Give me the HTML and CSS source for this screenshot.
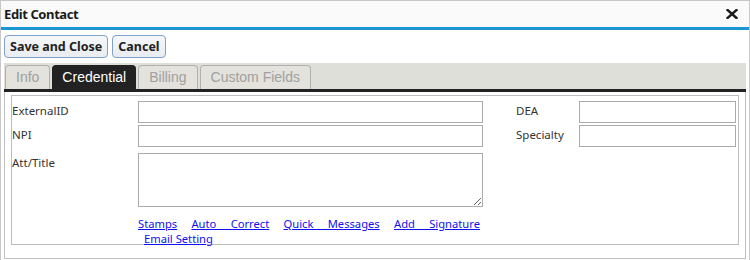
FILE: index.html
```html
<!DOCTYPE html>
<html lang="en">
<head>
    <meta charset="UTF-8">
    <title>Edit Contact</title>
    <link rel="stylesheet" href="styles.css">
</head>
<body>
    <div class="window">
        <div class="titlebar">
            <div class="title">Edit Contact</div>
            <svg class="close" width="12" height="10" viewBox="0 0 12 10">
                <path d="M1.5 1 L10.5 9 M10.5 1 L1.5 9" stroke="#1a1a1a" stroke-width="2.4" stroke-linecap="square"/>
            </svg>
        </div>

        <div class="toolbar">
            <button class="btn">Save and Close</button>
            <button class="btn">Cancel</button>
        </div>

        <div class="tabs">
            <div class="tab">Info</div>
            <div class="tab active">Credential</div>
            <div class="tab">Billing</div>
            <div class="tab">Custom Fields</div>
        </div>

        <div class="panel">
            <div class="box">
                <div class="form">
                    <label class="lbl">ExternalID</label>
                    <input type="text" class="field">
                    <label class="lbl lbl-right">DEA</label>
                    <input type="text" class="field">

                    <label class="lbl">NPI</label>
                    <input type="text" class="field">
                    <label class="lbl lbl-right">Specialty</label>
                    <input type="text" class="field">

                    <label class="lbl lbl-area">Att/Title</label>
                    <textarea class="area"></textarea>

                    <div class="links">
                        <div class="links-row">
                            <a href="#">Stamps</a> <a href="#">Auto Correct</a> <a href="#">Quick Messages</a> <a href="#">Add Signature</a>
                        </div>
                        <a href="#" class="email">Email Setting</a>
                    </div>
                </div>
            </div>
        </div>
    </div>
</body>
</html>
```

FILE: styles.css
```css
* {
    margin: 0;
    padding: 0;
    box-sizing: border-box;
}

body {
    font-family: 'Noto Sans', 'Open Sans', sans-serif;
    font-size: 11px;
    color: #333;
    background: #fff;
}

.window {
    width: 750px;
    height: 260px;
    border: 1px solid #c8c8c8;
    border-bottom: none;
    overflow: hidden;
}

.titlebar {
    height: 29px;
    background: #fafafa;
    border-bottom: 3px solid #1b95d3;
    display: flex;
    align-items: center;
    justify-content: space-between;
    padding: 0 11px 1px 3px;
}

.title {
    font-weight: bold;
    font-size: 13px;
    letter-spacing: -0.4px;
    color: #1a1a1a;
}

.close {
    display: block;
}

.toolbar {
    display: flex;
    gap: 4px;
    padding: 5px 3px 5px;
}

.btn {
    height: 23px;
    padding: 0 5px;
    font-family: 'Noto Sans', 'Open Sans', sans-serif;
    font-weight: bold;
    font-size: 12.5px;
    color: #222;
    background: linear-gradient(#f6f7f9, #e9ecf0);
    border: 1px solid #7da2ce;
    border-radius: 4px;
}

.tabs {
    margin: 0 3px;
    height: 29px;
    padding: 2px 1px 0;
    background: #dfdfd9;
    border-bottom: 3px solid #222;
    display: flex;
    gap: 2px;
    align-items: flex-end;
}

.tab {
    height: 24px;
    padding: 0 10px;
    font-family: 'Liberation Sans', Arial, sans-serif;
    font-size: 14px;
    line-height: 23px;
    color: #a0a0a0;
    background: #e3e2dc;
    border: 1px solid #b0b0b0;
    border-bottom: none;
    border-radius: 4px 4px 0 0;
}

.tab.active {
    padding: 0 9px;
    background: #222;
    border-color: #222;
    color: #fff;
}

.panel {
    margin: 0 3px;
    height: 167px;
    border: 1px solid #c0c0c0;
    border-top: none;
    padding: 3px 6px 13px;
}

.box {
    height: 150px;
    border: 1px solid #bdbdbd;
    padding: 5px 0 0 0;
}

.form {
    display: grid;
    grid-template-columns: 126px 345px 33px 63px 157px;
    row-gap: 2px;
}

.lbl {
    grid-column: 1;
    padding-top: 2px;
    font-size: 11.5px;
}

.lbl-right {
    grid-column: 4;
}

.field {
    height: 22px;
    border: 1px solid #ababab;
    font-family: inherit;
}

.form > .field:nth-of-type(2n) {
    grid-column: 5;
}

.form > .field:nth-of-type(2n+1) {
    grid-column: 2;
}

.lbl-area {
    margin-top: 4px;
}

.area {
    grid-column: 2;
    margin-top: 4px;
    height: 54px;
    border: 1px solid #ababab;
    font-family: inherit;
}

.links {
    grid-column: 2;
    line-height: 15px;
    padding-top: 7px;
    font-size: 11.2px;
}

.links-row {
    width: 342px;
    text-align: justify;
    text-align-last: justify;
}

.links a {
    color: #1010f0;
}

.links .email {
    margin-left: 6px;
}
```
